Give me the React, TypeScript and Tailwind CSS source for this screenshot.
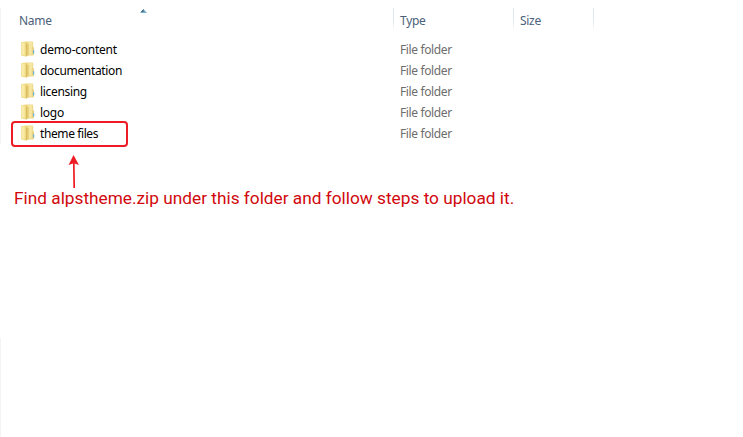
const files = [
  { name: 'demo-content', spacing: 'tracking-[-0.25px]' },
  { name: 'documentation', spacing: 'tracking-[-0.33px]' },
  { name: 'licensing', spacing: 'tracking-[-0.33px]' },
  { name: 'logo', spacing: 'tracking-[-0.25px]' },
  { name: 'theme files', spacing: 'tracking-[-0.4px]' },
];

function FolderIcon() {
  return (
    <svg width="14" height="16" viewBox="0 0 14 16" className="mb-[2px] block shrink-0">
      <path d="M5 .6h6.6l.6.8V6l.9.8v6.8l-1 .8H5z" fill="#ecd583" />
      <path d="M7 1h4.4v12.6H7z" fill="#f6e69f" />
      <path d="M.2 1.2 4.6.6 6 1.8v13.6l-1.2.2-4.6-1.2z" fill="#f0da80" />
      <path d="M.8 1.8h2.8v12.4L.8 13.6z" fill="#f9ecab" />
      <path d="M5 2.2v13.2l1.6-.8V2.9z" fill="#d9bd61" />
      <path d="M6.6 2.9h1.2v11.4l-1.2.3z" fill="#e8cf77" />
      <path d="M10.8 6.4h1.8v7.2h-1.8z" fill="#e7d186" />
      <path d="M12 9.2h1.2v3.4H12z" fill="#67b3d6" />
    </svg>
  );
}

function Divider() {
  return <div className="h-[22px] w-px bg-linear-to-b from-[#dce8ef] via-[#dce8ef] to-[#f7fafc]" />;
}

export default function App() {
  return (
    <main className="flex h-[437px] w-[743px] overflow-hidden bg-white font-['Noto_Sans','Open_Sans',sans-serif] text-[12px]">
      <div className="flex w-px shrink-0 flex-col justify-between pt-2">
        <div className="h-[136px] bg-[#f4f4f4]" />
        <div className="h-[99px] bg-[#f4f4f4]" />
      </div>
      <div className="flex flex-1 flex-col">
        <header className="flex h-[39px] pt-2 leading-[26px] tracking-[-0.3px] text-[#4c607a]">
          <div className="relative w-[392px] pl-[18px]">
            Name
            <svg width="7" height="4" viewBox="0 0 7 4" className="absolute top-[1px] left-[139px]">
              <path d="M3.5 0 7 4H0z" fill="#78b0cc" />
              <path d="M3.5 0 .9 3h2.6z" fill="#3d6277" />
            </svg>
          </div>
          <Divider />
          <div className="w-[119px] pl-[6px]">Type</div>
          <Divider />
          <div className="w-[79px] pl-[6px]">Size</div>
          <Divider />
        </header>
        <section>
          {files.map((file, i) => (
            <div key={file.name} className="grid h-[21px] grid-cols-[399px_1fr] items-center leading-[21px]">
              <div className="relative flex items-center gap-[5px] pl-5">
                <FolderIcon />
                <span className={`text-black ${file.spacing}`}>{file.name}</span>
                {i === 4 && <div className="absolute top-[-2px] left-[10px] h-[26px] w-[117px] rounded-[4px] border-2 border-[#ed1c24]" />}
              </div>
              <span className="tracking-[-0.37px] text-[#6d6d6d]">File folder</span>
            </div>
          ))}
        </section>
        <div className="pt-[11px] pl-[67px]">
          <svg width="12" height="33" viewBox="0 0 12 33" className="block">
            <path d="M5.8 7.5 6.2 33" stroke="#ed1c24" strokeWidth="1.7" />
            <path d="M5.5 0 11 10 5.8 8.3.5 10z" fill="#ed1c24" />
          </svg>
        </div>
        <p className="pl-[13px] font-['Roboto',sans-serif] text-[17.25px] leading-[20px] whitespace-nowrap text-[#d1080d]">
          Find alpstheme.zip under this folder and follow steps to upload it.
        </p>
      </div>
    </main>
  );
}
